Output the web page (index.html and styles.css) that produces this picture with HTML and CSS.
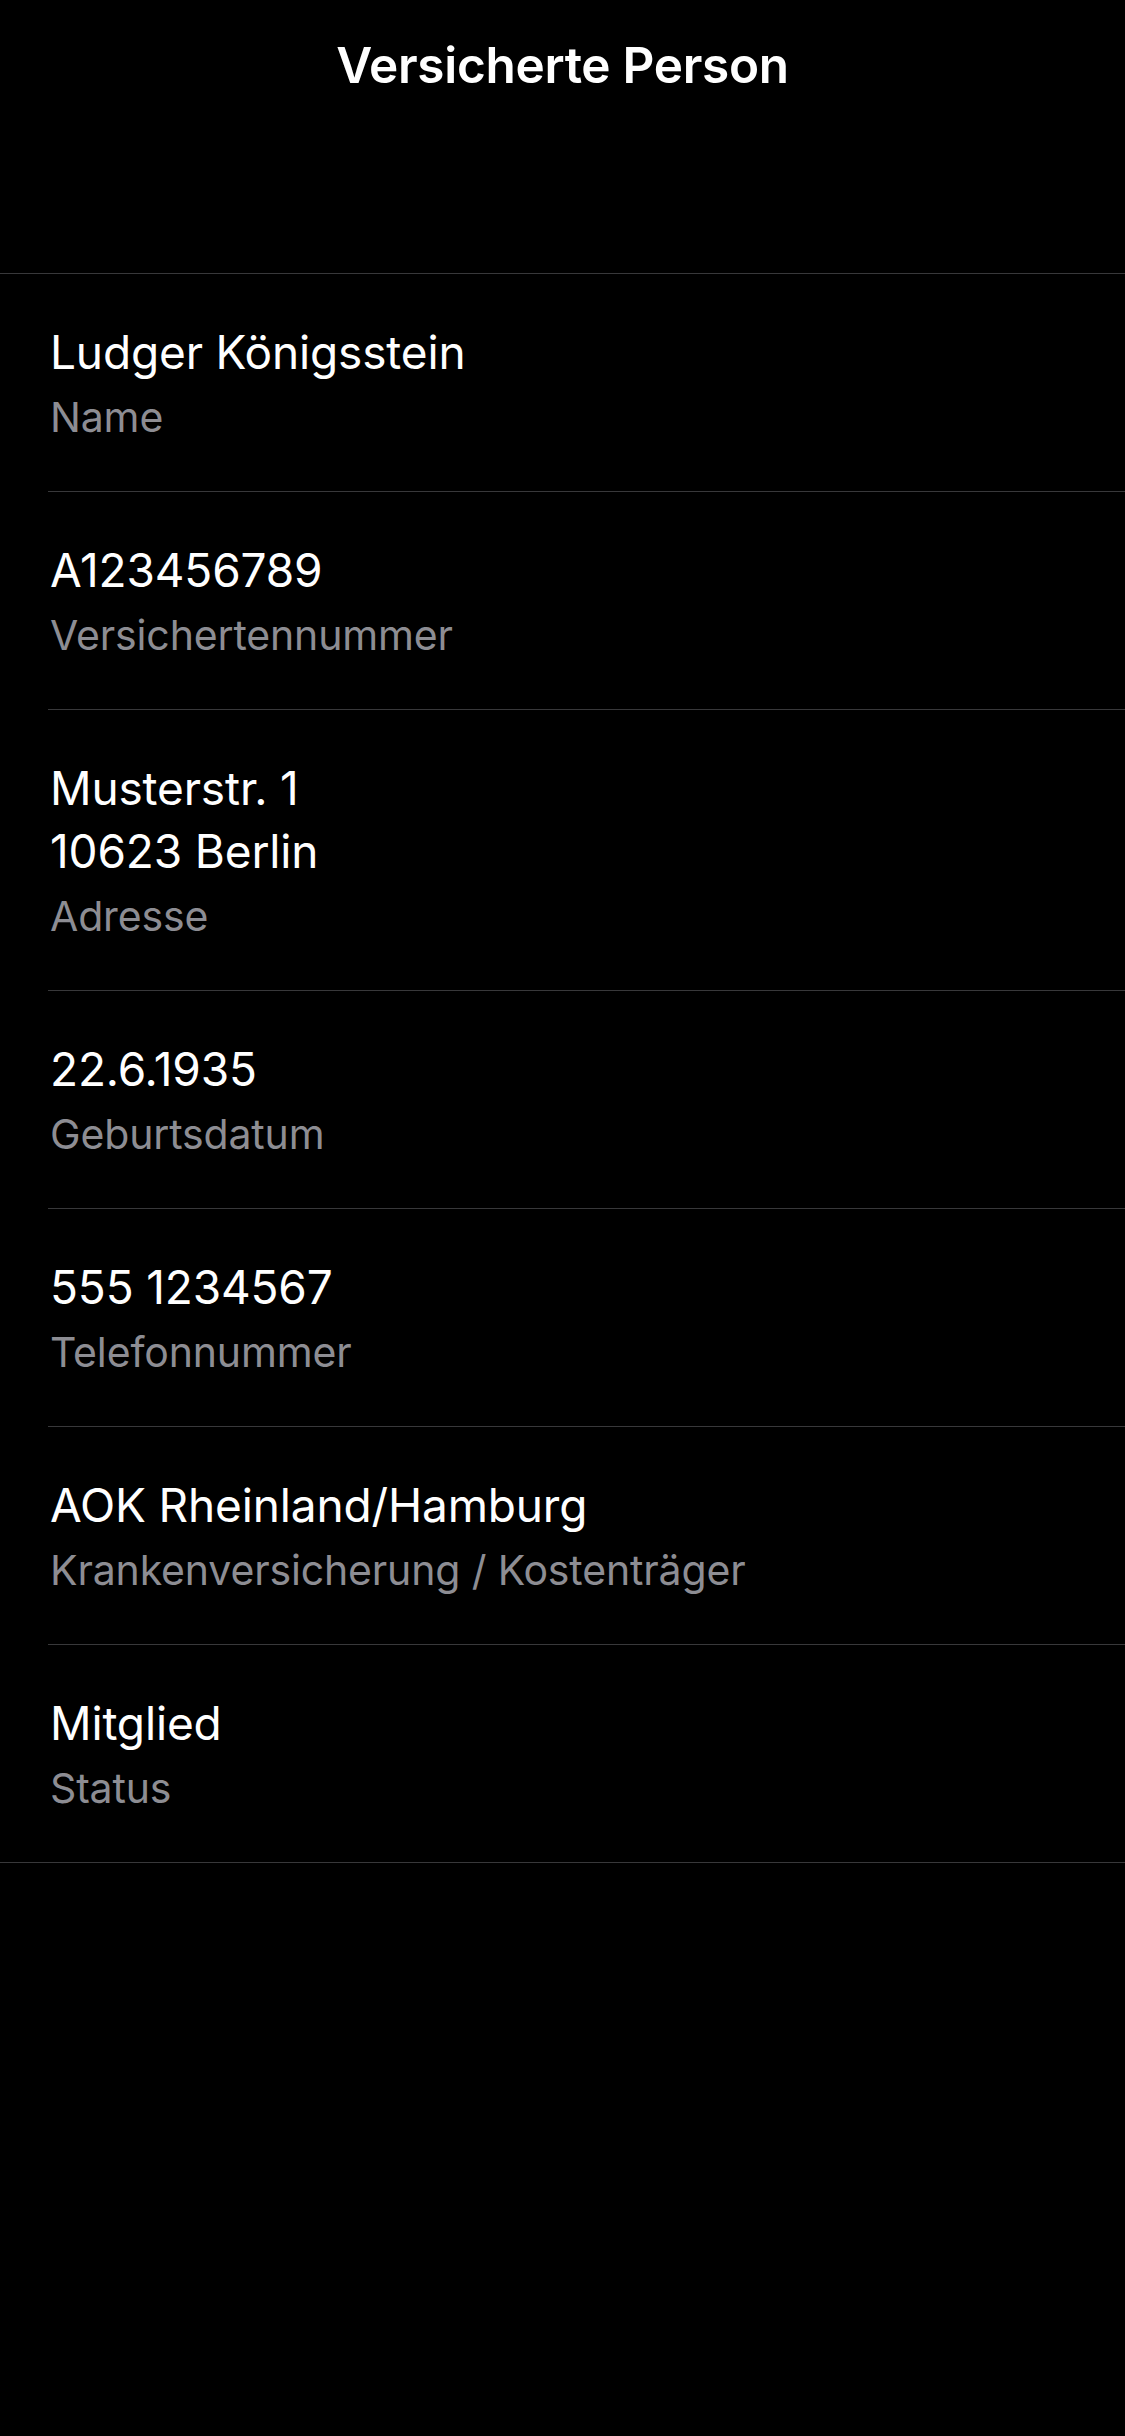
FILE: index.html
```html
<!DOCTYPE html>
<html lang="de">
<head>
<meta charset="utf-8">
<title>Versicherte Person</title>
<link rel="stylesheet" href="styles.css">
</head>
<body>
<header class="nav">
  <h1 class="nav-title">Versicherte Person</h1>
</header>
<ul class="list">
  <li class="row"><div class="cell"><div class="value">Ludger Königsstein</div><div class="label">Name</div></div></li>
  <li class="row"><div class="cell"><div class="value">A123456789</div><div class="label">Versichertennummer</div></div></li>
  <li class="row"><div class="cell"><div class="value">Musterstr. 1<br>10623 Berlin</div><div class="label">Adresse</div></div></li>
  <li class="row"><div class="cell"><div class="value">22.6.1935</div><div class="label">Geburtsdatum</div></div></li>
  <li class="row"><div class="cell"><div class="value">555 1234567</div><div class="label">Telefonnummer</div></div></li>
  <li class="row"><div class="cell"><div class="value">AOK Rheinland/Hamburg</div><div class="label">Krankenversicherung / Kostenträger</div></div></li>
  <li class="row"><div class="cell"><div class="value">Mitglied</div><div class="label">Status</div></div></li>
</ul>
</body>
</html>
```
FILE: styles.css
```css
html, body {
  margin: 0;
  padding: 0;
  background: #000;
  color: #fff;
  font-family: Inter, "Noto Sans", "Liberation Sans", sans-serif;
  width: 1125px;
  min-height: 2436px;
}
.nav {
  height: 273px;
  box-sizing: border-box;
  padding-top: 35px;
  text-align: center;
}
.nav-title {
  margin: 0;
  font-size: 49.5px;
  line-height: 61px;
  font-weight: 600;
  letter-spacing: -0.3px;
}
.list {
  list-style: none;
  margin: 0;
  padding: 0;
  border-top: 1px solid #38383a;
  border-bottom: 1px solid #38383a;
}
.row {
  padding-left: 48px;
}
.cell {
  padding: 47px 0 42px 2px;
  border-bottom: 1px solid #38383a;
}
.row:last-child .cell {
  border-bottom: none;
}
.value {
  font-size: 46px;
  line-height: 63px;
  font-weight: 400;
  letter-spacing: -0.15px;
}
.label {
  margin-top: 2px;
  font-size: 41px;
  line-height: 63px;
  color: #8d8d93;
  letter-spacing: -0.15px;
}
```
